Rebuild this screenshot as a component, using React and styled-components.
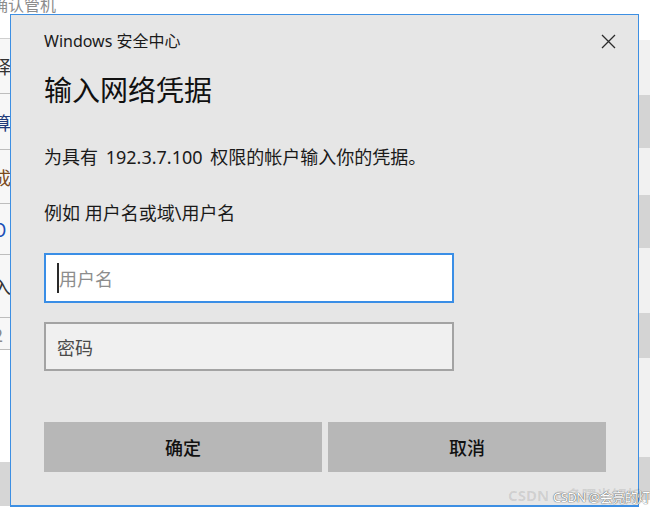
import React from 'react';
import styled, { createGlobalStyle } from 'styled-components';

const GlobalStyle = createGlobalStyle`
  html, body {
    margin: 0;
    padding: 0;
    background: #ffffff;
  }
  body {
    font-family: "Noto Sans", "Noto Sans CJK SC", sans-serif;
  }
`;

const leftRows = [
  { char: '择', color: '#333', height: 54 },
  { char: '算', color: '#1f3a7a', height: 55 },
  { char: '成', color: '#7a4a1c', height: 53 },
  { char: 'O', color: '#1a4fb8', height: 50 },
  { char: '入', color: '#333', height: 62 },
  { char: '2', color: '#8a8a8a', height: 31 },
];

const rightBars = [
  { top: 55, height: 53 },
  { top: 47, height: 53 },
  { top: 65, height: 45 },
  { top: 99, height: 43 },
];

const Page = () => (
  <>
    <GlobalStyle />
    <Screen>
      <Backdrop>
        <LeftRail>
          <Caption>确认管机</Caption>
          <RailList>
            {leftRows.map((row) => (
              <RailRow key={row.char} $h={row.height}>
                <RailChar $color={row.color}>{row.char}</RailChar>
              </RailRow>
            ))}
          </RailList>
          <RailFooter />
        </LeftRail>
        <RightRail>
          {rightBars.map((bar, i) => (
            <RightBar key={i} $gap={bar.top} $h={bar.height} />
          ))}
        </RightRail>
      </Backdrop>

      <Dialog>
        <Header>
          <AppName>Windows 安全中心</AppName>
          <CloseButton aria-label="关闭">
            <svg width="15" height="15" viewBox="0 0 15 15">
              <path d="M1 1 L14 14 M14 1 L1 14" stroke="#2b2b2b" strokeWidth="1.3" fill="none" />
            </svg>
          </CloseButton>
        </Header>
        <Heading>输入网络凭据</Heading>
        <Message>为具有 192.3.7.100 权限的帐户输入你的凭据。</Message>
        <Hint>例如 用户名或域\用户名</Hint>
        <Field $focused>
          <Caret />
          <Placeholder $focused>用户名</Placeholder>
        </Field>
        <Field>
          <Placeholder>密码</Placeholder>
        </Field>
        <Actions>
          <ActionButton>确定</ActionButton>
          <ActionButton>取消</ActionButton>
        </Actions>
      </Dialog>

      <WatermarkBack>CSDN @多曙光解析</WatermarkBack>
      <Watermark>CSDN @会亮的灯</Watermark>
    </Screen>
  </>
);

const Screen = styled.div`
  position: relative;
  width: 650px;
  height: 514px;
  overflow: hidden;
  background: #ffffff;
`;

const Backdrop = styled.div`
  display: flex;
  justify-content: space-between;
  height: 100%;
`;

const LeftRail = styled.div`
  width: 60px;
  display: flex;
  flex-direction: column;
`;

const Caption = styled.div`
  margin: -7px 0 0 -8px;
  height: 45px;
  font-family: "Noto Sans CJK SC", sans-serif;
  font-size: 16px;
  line-height: 22px;
  color: #8c8c8c;
  white-space: nowrap;
`;

const RailList = styled.div`
  display: flex;
  flex-direction: column;
  border-top: 1px solid #cfcfcf;
`;

const RailRow = styled.div`
  height: ${(p) => p.$h}px;
  border-bottom: 1px solid #bdbdbd;
  background: #f7f7f7;
  display: flex;
  align-items: center;
  overflow: hidden;
`;

const RailChar = styled.span`
  margin-left: -7px;
  font-family: "Noto Sans CJK SC", sans-serif;
  font-size: 18px;
  color: ${(p) => p.$color};
`;

const RailFooter = styled.div`
  margin-top: 112px;
  height: 44px;
  background: #d6d6d6;
`;

const RightRail = styled.div`
  width: 60px;
  margin-top: 40px;
  height: 460px;
  background: #f1f1f1;
  display: flex;
  flex-direction: column;
`;

const RightBar = styled.div`
  margin-top: ${(p) => p.$gap}px;
  height: ${(p) => p.$h}px;
  background: #d4d4d4;
`;

const Dialog = styled.section`
  position: absolute;
  left: 10px;
  top: 14px;
  width: 629px;
  height: 493px;
  box-sizing: border-box;
  padding: 15px 0 0 33px;
  background: #e6e6e6;
  border: 1px solid #3d8fe3;
  border-bottom-width: 2px;
  font-family: "Noto Sans", "Noto Sans CJK SC", sans-serif;
  color: #1a1a1a;
`;

const Header = styled.div`
  display: flex;
  align-items: center;
  justify-content: space-between;
  height: 22px;
  padding-right: 22px;
`;

const AppName = styled.div`
  font-size: 16px;
  line-height: 22px;
  color: #1a1a1a;
`;

const CloseButton = styled.div`
  display: flex;
  align-items: center;
  justify-content: center;
  width: 16px;
  height: 16px;
`;

const Heading = styled.h1`
  margin: 19px 0 0;
  font-family: "Noto Sans CJK SC", sans-serif;
  font-size: 28px;
  font-weight: 400;
  line-height: 36px;
  color: #111;
`;

const Message = styled.p`
  margin: 37px 0 0;
  font-size: 18px;
  line-height: 26px;
  color: #1a1a1a;
  word-spacing: 3px;
`;

const Hint = styled.p`
  margin: 30px 0 0;
  font-size: 18px;
  line-height: 26px;
  color: #1a1a1a;
`;

const Field = styled.div`
  margin-top: ${(p) => (p.$focused ? 27 : 19)}px;
  width: 410px;
  height: ${(p) => (p.$focused ? 50 : 49)}px;
  box-sizing: border-box;
  display: flex;
  align-items: center;
  padding-left: 11px;
  border: 2px solid ${(p) => (p.$focused ? '#3a8ee6' : '#a3a3a3')};
  background: ${(p) => (p.$focused ? '#ffffff' : '#f0f0f0')};
`;

const Caret = styled.span`
  width: 2px;
  height: 30px;
  background: #2a2a2a;
`;

const Placeholder = styled.span`
  font-family: "Noto Sans CJK SC", sans-serif;
  font-size: 18px;
  line-height: 26px;
  color: ${(p) => (p.$focused ? '#8d8d8d' : '#4a4a4a')};
`;

const Actions = styled.div`
  margin-top: 51px;
  display: grid;
  grid-template-columns: 278px 278px;
  gap: 6px;
`;

const ActionButton = styled.div`
  height: 50px;
  display: flex;
  align-items: center;
  justify-content: center;
  background: #b7b7b7;
  font-family: "Noto Sans CJK SC", sans-serif;
  font-size: 18px;
  font-weight: 500;
  color: #111;
`;

const WatermarkBack = styled.div`
  position: absolute;
  left: 508px;
  top: 484px;
  font-family: "Noto Sans", "Noto Sans CJK SC", sans-serif;
  font-size: 15px;
  font-weight: 700;
  color: rgba(0, 0, 0, 0.1);
  white-space: nowrap;
`;

const Watermark = styled.div`
  position: absolute;
  left: 553px;
  top: 488px;
  font-family: "Noto Sans", "Noto Sans CJK SC", sans-serif;
  font-size: 13px;
  line-height: 18px;
  color: #ffffff;
  text-shadow: 0 0 1px #555, 0 0 1px #555;
  white-space: nowrap;
  letter-spacing: -0.5px;
`;

export default Page;
